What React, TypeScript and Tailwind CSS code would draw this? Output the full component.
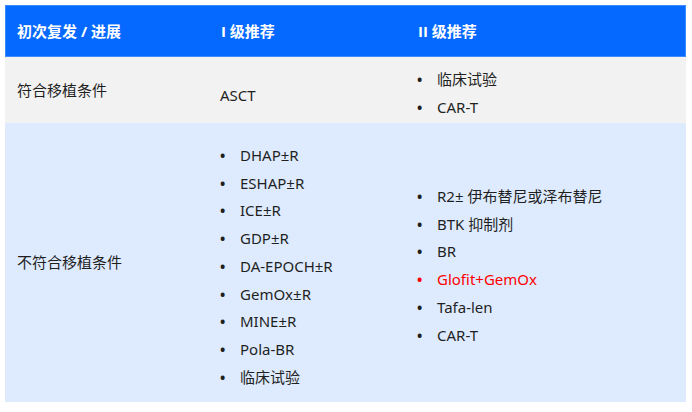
import React from "react";

const font = { fontFamily: '"Noto Sans", "Noto Sans CJK SC", sans-serif' };
const headFont = { fontFamily: '"Open Sans", "Noto Sans CJK SC", sans-serif' };

function Item({ text, red }: { text: string; red?: boolean }) {
  return (
    <li className={`flex leading-[27.7px] ${red ? "text-[#ff0000]" : "text-[#1f1f1f]"}`}>
      <span className="w-[20px] shrink-0 text-[14px] font-bold leading-[27.7px]">•</span>
      <span>{text}</span>
    </li>
  );
}

export default function App() {
  const col2 = ["DHAP±R", "ESHAP±R", "ICE±R", "GDP±R", "DA-EPOCH±R", "GemOx±R", "MINE±R", "Pola-BR", "临床试验"];
  const col3 = ["R2± 伊布替尼或泽布替尼", "BTK 抑制剂", "BR", "Glofit+GemOx", "Tafa-len", "CAR-T"];
  return (
    <div className="w-[692px] h-[412px] bg-white pt-[5px] pl-[5px] text-[15px]" style={font}>
      <div className="w-[681px] flex flex-col">
        <div
          className="grid grid-cols-[203px_197px_281px] h-[52px] bg-[#0568ff] border border-[#3d8bff] text-white font-bold items-center"
          style={headFont}
        >
          <div className="pl-[11px]">初次复发 / 进展</div>
          <div className="pl-[12px]">I 级推荐</div>
          <div className="pl-[12px]">II 级推荐</div>
        </div>
        <div className="grid grid-cols-[203px_197px_281px] h-[66px] bg-[#f2f2f2] text-[#1f1f1f]">
          <div className="pl-[12px] flex items-center">符合移植条件</div>
          <div className="pl-[12px] pt-[24px] leading-[28px]">ASCT</div>
          <div className="pl-[12px] pt-[9px]">
            <ul>
              <Item text="临床试验" />
              <Item text="CAR-T" />
            </ul>
          </div>
        </div>
        <div className="grid grid-cols-[203px_197px_281px] h-[279px] bg-[#deebfe] text-[#1f1f1f]">
          <div className="pl-[12px] flex items-center">不符合移植条件</div>
          <div className="pl-[12px] pt-[19px]">
            <ul>
              {col2.map((t) => (
                <Item key={t} text={t} />
              ))}
            </ul>
          </div>
          <div className="pl-[12px] pt-[60px]">
            <ul>
              {col3.map((t) => (
                <Item key={t} text={t} red={t === "Glofit+GemOx"} />
              ))}
            </ul>
          </div>
        </div>
      </div>
    </div>
  );
}
